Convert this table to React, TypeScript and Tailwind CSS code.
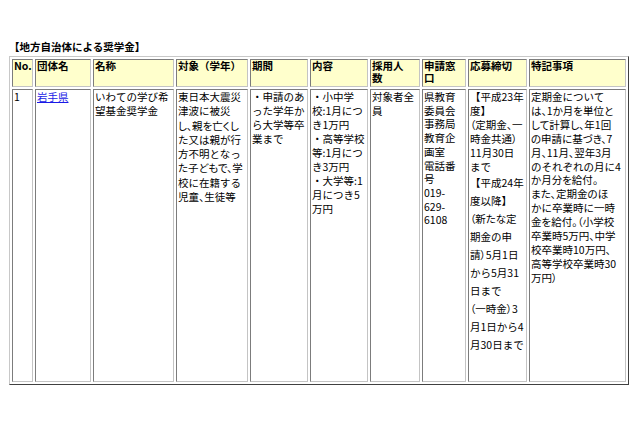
import React from "react";

const cellBase =
  "border border-t-[#7c7c7c] border-l-[#7c7c7c] border-b-[#c4c4c4] border-r-[#c4c4c4] px-[1px] overflow-hidden whitespace-nowrap";

const headers: string[][] = [
  ["No."],
  ["団体名"],
  ["名称"],
  ["対象（学年）"],
  ["期間"],
  ["内容"],
  ["採用人", "数"],
  ["申請窓", "口"],
  ["応募締切"],
  ["特記事項"],
];

// lines starting with "~" get proportional (palt) glyph widths
const Lines = ({ lines }: { lines: string[] }) => (
  <>
    {lines.map((l, i) =>
      l.startsWith("~") ? (
        <div key={i} className="[font-feature-settings:'palt']">
          {l.slice(1)}
        </div>
      ) : (
        <div key={i}>{l}</div>
      )
    )}
  </>
);

export default function App() {
  return (
    <div className="w-[640px] h-[426px] bg-white text-black font-['Noto_Sans_CJK_JP','Noto_Sans',sans-serif]">
      <div className="pt-[40px] pl-[9px] text-[10.5px] leading-[14px] font-bold">【地方自治体による奨学金】</div>
      <div className="mt-[2px] ml-[9px] w-[620px] border border-t-[#c8c8c8] border-l-[#c8c8c8] border-r-[#404040] border-b-[#404040] p-[2px] grid gap-[2px] grid-cols-[21px_56px_81px_72px_58px_58px_50px_44px_59px_97px] grid-rows-[28px_293px] text-[10.5px]">
        {headers.map((h, i) => (
          <div key={i} className={`${cellBase} bg-[#ffffcc] font-bold leading-[12px]`}>
            <Lines lines={h} />
          </div>
        ))}
        <div className={`${cellBase} leading-[14px]`}>1</div>
        <div className={`${cellBase} leading-[14px]`}>
          <a href="#" className="text-[#1a1ae6] underline">岩手県</a>
        </div>
        <div className={`${cellBase} leading-[14px]`}>
          <Lines lines={["いわての学び希", "望基金奨学金"]} />
        </div>
        <div className={`${cellBase} leading-[14.3px]`}>
          <Lines
            lines={[
              "東日本大震災",
              "津波に被災",
              "~し、親を亡くし",
              "た又は親が行",
              "方不明となっ",
              "~た子どもで、学",
              "校に在籍する",
              "~児童、生徒等",
            ]}
          />
        </div>
        <div className={`${cellBase} leading-[14px]`}>
          <Lines lines={["・申請のあ", "った学年か", "ら大学等卒", "業まで"]} />
        </div>
        <div className={`${cellBase} leading-[14px]`}>
          <Lines
            lines={[
              "・小中学",
              "校:1月につ",
              "き1万円",
              "・高等学校",
              "等:1月につ",
              "き3万円",
              "・大学等:1",
              "月につき5",
              "万円",
            ]}
          />
        </div>
        <div className={`${cellBase} leading-[14px]`}>
          <Lines lines={["対象者全", "員"]} />
        </div>
        <div className={`${cellBase} leading-[13.7px]`}>
          <Lines
            lines={["県教育", "委員会", "事務局", "教育企", "画室", "電話番", "号", "019-", "629-", "6108"]}
          />
        </div>
        <div className={`${cellBase}`}>
          <div className="leading-[14px]">
            <Lines lines={["【平成23年", "度】", "~（定期金、一", "~時金共通）", "11月30日", "まで"]} />
          </div>
          <div className="leading-[18px]">
            <Lines
              lines={[
                "【平成24年",
                "度以降】",
                "~（新たな定",
                "期金の申",
                "~請）5月1日",
                "から5月31",
                "日まで",
                "~（一時金）3",
                "月1日から4",
                "月30日まで",
              ]}
            />
          </div>
        </div>
        <div className={`${cellBase} leading-[13.9px]`}>
          <Lines
            lines={[
              "定期金について",
              "~は、1か月を単位と",
              "~して計算し、年1回",
              "~の申請に基づき、7",
              "~月、11月、翌年3月",
              "のそれぞれの月に4",
              "~か月分を給付。",
              "~また、定期金のほ",
              "かに卒業時に一時",
              "~金を給付。（小学校",
              "~卒業時5万円、中学",
              "~校卒業時10万円、",
              "高等学校卒業時30",
              "~万円）",
            ]}
          />
        </div>
      </div>
    </div>
  );
}
